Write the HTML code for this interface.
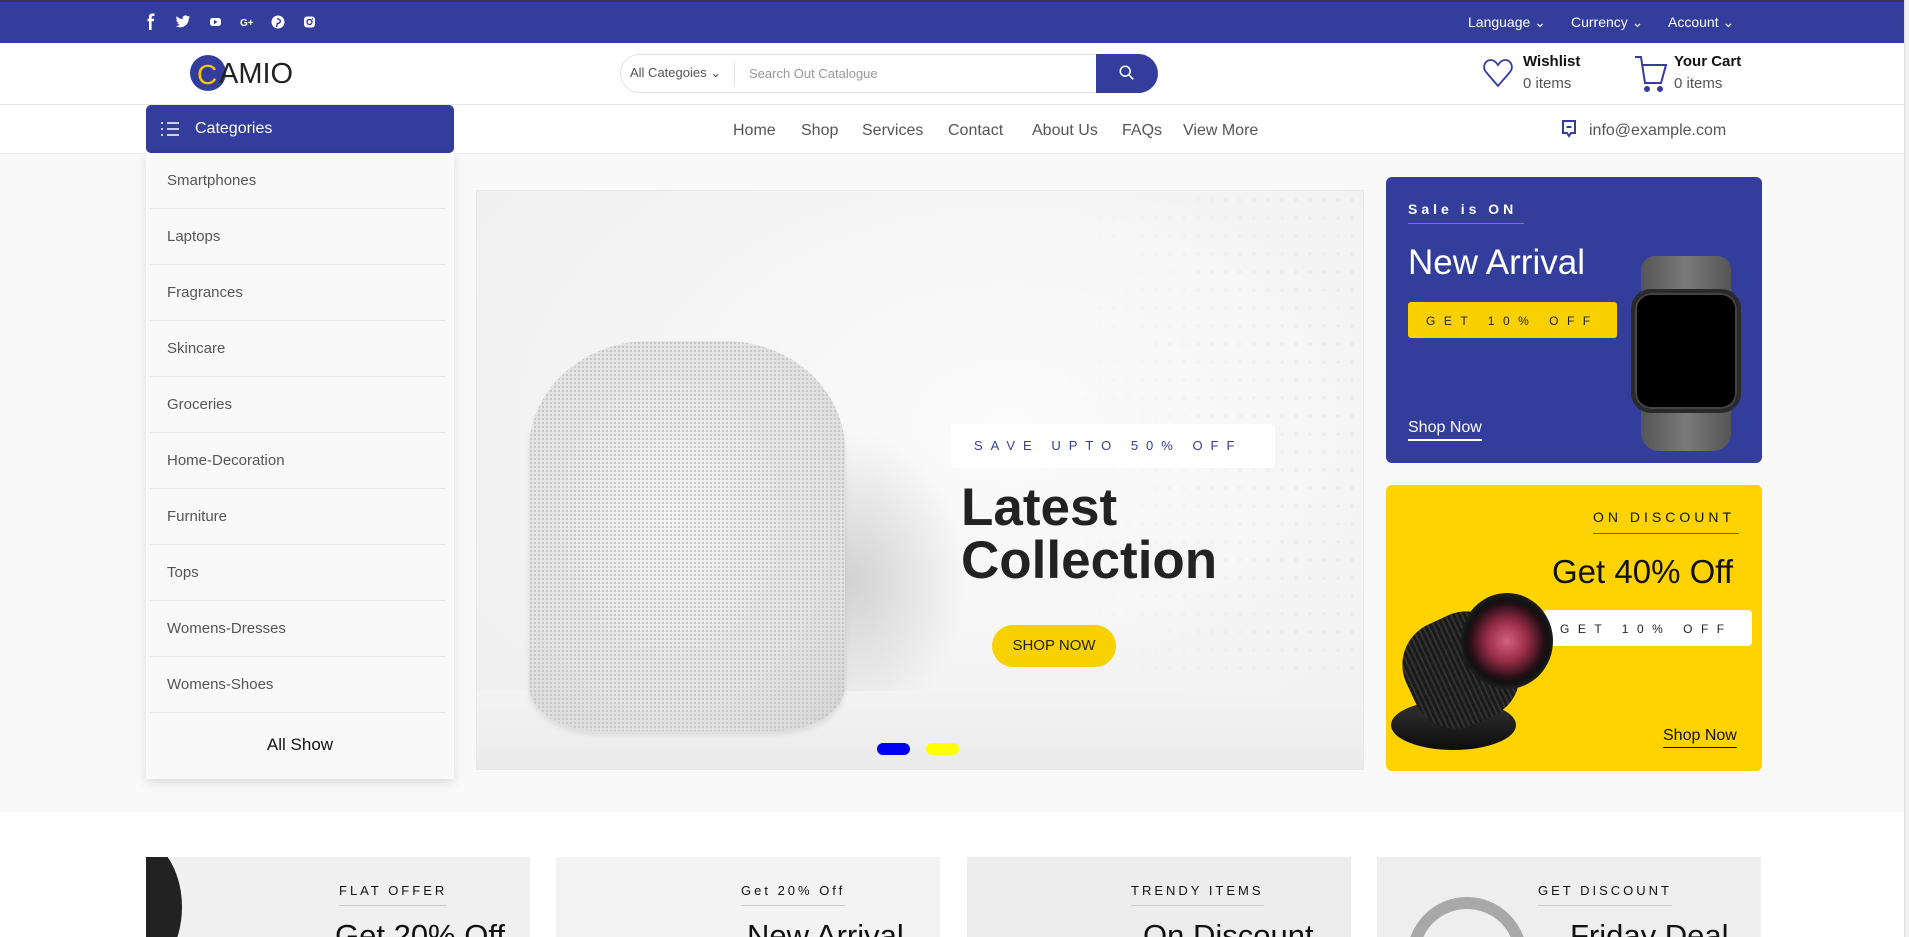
<!DOCTYPE html>
<html style="overflow:hidden"><head><meta charset="utf-8"><style>
*{margin:0;padding:0;box-sizing:border-box}
html,body{overflow:hidden}
body{width:1909px;height:937px;font-family:"Liberation Sans",sans-serif;background:#fff;position:relative;color:#333}
.a{position:absolute;white-space:nowrap}
.top{left:0;top:0;width:1909px;height:43px;background:#333d9c;border-top:2px solid #3a3a3a}
.tb{color:#fff;font-size:14px;top:14px}
.hdr{left:0;top:43px;width:1909px;height:62px;border-bottom:1px solid #e6e6e6;background:#fff}
.gray{left:0;top:153px;width:1909px;height:659px;background:#f9f9f9;border-top:1px solid #ececec}
.nav a{position:absolute;top:122px;font-size:16px;color:#555;text-decoration:none}
.cat{left:146px;top:153px;width:308px;height:626px;background:#f9f9f9;box-shadow:0 4px 10px rgba(0,0,0,.12)}
.ci{position:absolute;left:4px;width:296px;height:56px;border-bottom:1px solid #e6e6e6;font-size:15px;color:#555;padding:19px 0 0 17px}
.lab{font-size:13px;letter-spacing:3px;color:#111}
</style></head><body>
<div class="a top"></div>
<svg class="a" style="left:143px;top:12px" width="180" height="20" viewBox="0 0 180 20" fill="#fff">
<path d="M9 4h2.500V1.500H9C6.8 1.500 6 3 6 5v1.800H4.500v2.500H6V18h2.600V9.300h2.200l.4-2.500H8.600V5.200c0-.7.200-1.200 1.400-1.200z"/>
<path d="M47 5c-.5.2-1.100.4-1.700.4.6-.4 1.100-.9 1.300-1.600-.6.300-1.200.6-1.900.7a2.900 2.900 0 0 0-5 2.700C37.300 7.100 35.200 6 33.700 4.300c-.8 1.300-.4 3 .9 3.900-.5 0-.9-.2-1.300-.4 0 1.400 1 2.600 2.300 2.900-.4.100-.9.200-1.300.1.400 1.200 1.500 2 2.700 2A5.800 5.800 0 0 1 32.800 14c1.300.8 2.800 1.300 4.500 1.300 5.400 0 8.400-4.500 8.400-8.400v-.4c.6-.4 1-.9 1.300-1.500z"/>
<rect x="67" y="6" width="11" height="8" rx="2.500"/><path d="M71 7.800v4.400l3.500-2.200z" fill="#333d9c"/>
<text x="97" y="14" font-size="10" font-weight="bold" font-family="Liberation Sans">G+</text>
<circle cx="135" cy="10" r="6.500"/><path d="M134 7c2.600-.4 3.900 1.600 3 3.300-.6 1.200-2.200 1.200-2.400.4l-1.100 4.400" stroke="#333d9c" stroke-width="1.400" fill="none"/>
<rect x="161" y="4.500" width="11" height="11" rx="3"/><circle cx="166.500" cy="10" r="2.500" fill="none" stroke="#333d9c" stroke-width="1.400"/><circle cx="169.500" cy="7" r=".8" fill="#333d9c"/>
</svg>
<div class="a tb" style="left:1468px">Language &#8964;</div>
<div class="a tb" style="left:1571px">Currency &#8964;</div>
<div class="a tb" style="left:1668px">Account &#8964;</div>

<div class="a hdr"></div>
<div class="a" style="left:190px;top:55px;width:36px;height:36px;border-radius:50%;background:#333d9c"></div>
<div class="a" style="left:197px;top:59px;font-size:28px;color:#f6c800">C</div>
<div class="a" style="left:219px;top:58px;font-size:29px;color:#222">AMIO</div>
<div class="a" style="left:620px;top:54px;width:520px;height:39px;border:1px solid #e2e2e2;border-radius:20px 0 0 20px;background:#fff"></div>
<div class="a" style="left:630px;top:65px;font-size:13px;color:#555">All Categoies &#8964;</div>
<div class="a" style="left:734px;top:62px;width:1px;height:24px;background:#e2e2e2"></div>
<div class="a" style="left:749px;top:66px;font-size:13px;color:#999">Search Out Catalogue</div>
<div class="a" style="left:1096px;top:54px;width:62px;height:39px;background:#333d9c;border-radius:0 20px 20px 0"></div>
<svg class="a" style="left:1118px;top:64px" width="18" height="18" viewBox="0 0 20 20" fill="none" stroke="#fff" stroke-width="1.700"><circle cx="8" cy="8" r="5.500"/><path d="M12 12l5 5"/></svg>
<svg class="a" style="left:1482px;top:57px" width="32" height="32" viewBox="0 0 32 32" fill="none" stroke="#333d9c" stroke-width="1.800"><path d="M16 29L4 15C0 10 3 3 9 3c3 0 5 2 7 5 2-3 4-5 7-5 6 0 9 7 5 12z"/></svg>
<div class="a" style="left:1523px;top:53px;font-size:15px;font-weight:bold;color:#111">Wishlist</div>
<div class="a" style="left:1523px;top:75px;font-size:15px;color:#555">0 items</div>
<svg class="a" style="left:1634px;top:55px" width="36" height="38" viewBox="0 0 36 38" fill="none" stroke="#333d9c" stroke-width="2"><path d="M1 2h6l4 26h16l5-18H9"/><circle cx="13" cy="34" r="2" fill="#333d9c"/><circle cx="26" cy="34" r="2" fill="#333d9c"/></svg>
<div class="a" style="left:1674px;top:53px;font-size:15px;font-weight:bold;color:#111">Your Cart</div>
<div class="a" style="left:1674px;top:75px;font-size:15px;color:#555">0 items</div>

<div class="a gray"></div>
<div class="a" style="left:146px;top:105px;width:308px;height:48px;background:#333d9c;border-radius:5px"></div>
<svg class="a" style="left:160px;top:121px" width="20" height="16" viewBox="0 0 20 16" stroke="#fff" stroke-width="1.600"><path d="M1 2h2M7 2h12M1 8h2M7 8h12M1 14h2M7 14h12"/></svg>
<div class="a" style="left:195px;top:120px;font-size:16px;color:#fff">Categories</div>
<div class="nav"><a style="left:733px">Home</a><a style="left:801px">Shop</a><a style="left:862px">Services</a><a style="left:948px">Contact</a><a style="left:1032px">About Us</a><a style="left:1122px">FAQs</a><a style="left:1183px">View More</a></div>
<svg class="a" style="left:1561px;top:119px" width="16" height="20" viewBox="0 0 16 20" fill="none" stroke="#333d9c" stroke-width="2"><path d="M2 2h12v12H10l-2 3-2-3H2z"/><path d="M5.500 8h5"/></svg>
<div class="a" style="left:1589px;top:122px;font-size:16px;color:#555">info@example.com</div>

<div class="a cat">
<div class="ci" style="top:0">Smartphones</div><div class="ci" style="top:56px">Laptops</div><div class="ci" style="top:112px">Fragrances</div><div class="ci" style="top:168px">Skincare</div><div class="ci" style="top:224px">Groceries</div><div class="ci" style="top:280px">Home-Decoration</div><div class="ci" style="top:336px">Furniture</div><div class="ci" style="top:392px">Tops</div><div class="ci" style="top:448px">Womens-Dresses</div><div class="ci" style="top:504px">Womens-Shoes</div>
<div class="a" style="left:0;top:582px;width:308px;text-align:center;font-size:17px;color:#111">All Show</div>
</div>

<!-- slider -->
<div class="a" style="left:476px;top:190px;width:888px;height:580px;border:1px solid #e8e8e8;background:radial-gradient(ellipse at 60% 40%,#fbfbfb,#f2f2f2 70%,#eeeeee);overflow:hidden">
<div class="a" style="left:560px;top:0;width:328px;height:480px;background:radial-gradient(circle,#dde5f0 1.500px,transparent 2px) 0 0/14px 18px;opacity:.6;-webkit-mask:linear-gradient(90deg,transparent,#000)"></div>
<div class="a" style="left:260px;top:240px;width:230px;height:300px;border-radius:50%;background:radial-gradient(ellipse,#d2d2d2,transparent 70%)"></div>
<div class="a" style="left:0;top:500px;width:888px;height:80px;background:linear-gradient(#f3f3f3,#ebebeb)"></div>
<div class="a" style="left:52px;top:150px;width:316px;height:390px;border-radius:120px 120px 70px 70px/110px 110px 45px 45px;background:radial-gradient(circle,#c6c6c6 .9px,transparent 1.500px) 0 0/4px 4px,radial-gradient(ellipse at 45% 45%,#f6f6f6,#e2e2e2 75%,#d4d4d4);box-shadow:0 4px 6px rgba(0,0,0,.08)"></div>
<div class="a" style="left:474px;top:233px;width:324px;height:44px;background:#fff;border-radius:4px;font-size:13px;letter-spacing:8px;color:#333d9c;padding:14px 0 0 23px">SAVE UPTO 50% OFF</div>
<div class="a" style="left:484px;top:290px;font-size:53px;font-weight:bold;line-height:53px;color:#222">Latest<br>Collection</div>
<div class="a" style="left:515px;top:434px;width:124px;height:42px;border-radius:21px;background:#f9d000;font-size:15px;color:#222;text-align:center;line-height:42px">SHOP NOW</div>
<div class="a" style="left:400px;top:552px;width:33px;height:12px;border-radius:6px;background:#0000f5"></div>
<div class="a" style="left:449px;top:552px;width:33px;height:12px;border-radius:6px;background:#ffff00"></div>
</div>

<!-- banner 1 -->
<div class="a" style="left:1386px;top:177px;width:376px;height:286px;background:#333d9c;border-radius:6px;overflow:hidden">
<div class="a" style="left:22px;top:24px;font-size:14px;font-weight:bold;letter-spacing:4px;color:#fff;padding-bottom:6px;border-bottom:1px solid #8a7e6a;width:116px">Sale is ON</div>
<div class="a" style="left:22px;top:66px;font-size:35px;color:#fff">New Arrival</div>
<div class="a" style="left:22px;top:125px;width:209px;height:36px;background:#f9d000;border-radius:3px;font-size:12px;letter-spacing:8.500px;color:#222;padding:12px 0 0 18px">GET 10% OFF</div>
<div class="a" style="left:22px;top:242px;font-size:16px;color:#fff;border-bottom:2px solid #fff;padding-bottom:2px">Shop Now</div>
<div class="a" style="left:255px;top:79px;width:90px;height:195px;border-radius:14px 14px 18px 18px;background:linear-gradient(90deg,#555,#7a7a7a 50%,#555)"></div>
<div class="a" style="left:245px;top:112px;width:110px;height:124px;border-radius:20px;background:#000;border:4px solid #2a2a2a;box-shadow:inset 0 0 0 2px #444"></div>
</div>

<!-- banner 2 -->
<div class="a" style="left:1386px;top:485px;width:376px;height:286px;background:#ffd300;border-radius:6px;overflow:hidden">
<div class="a" style="left:207px;top:24px;font-size:14px;letter-spacing:4px;color:#111;padding-bottom:8px;border-bottom:1px solid #5a5aa0;width:146px">ON DISCOUNT</div>
<div class="a" style="left:166px;top:68px;font-size:33px;color:#111">Get 40% Off</div>
<div class="a" style="left:157px;top:125px;width:209px;height:36px;background:#fff;border-radius:4px;font-size:12px;letter-spacing:8.500px;color:#222;padding:12px 0 0 17px">GET 10% OFF</div>
<div class="a" style="left:277px;top:242px;font-size:16px;color:#111;border-bottom:1px solid #111;padding-bottom:2px">Shop Now</div>
<div class="a" style="left:5px;top:215px;width:125px;height:50px;border-radius:50%;background:linear-gradient(#333,#0c0c0c)"></div>
<div class="a" style="left:20px;top:130px;width:110px;height:110px;border-radius:40%;background:repeating-linear-gradient(90deg,#1a1a1a 0 3px,#333 3px 5px);transform:rotate(-25deg)"></div>
<div class="a" style="left:75px;top:108px;width:92px;height:96px;border-radius:50%;background:radial-gradient(circle,#d5607a 0,#9a2d48 30%,#2a0f18 55%,#111 62%,#2b2b2b 80%,#111 100%)"></div>
</div>

<!-- bottom cards -->
<div class="a" style="left:0;top:812px;width:1909px;height:125px;background:#fff"></div>
<div class="a" style="left:146px;top:857px;width:384px;height:80px;background:#f0f0f0;overflow:hidden"><div class="a" style="left:-60px;top:-20px;width:96px;height:140px;border-radius:50%;background:#222"></div></div>
<div class="a" style="left:556px;top:857px;width:384px;height:80px;background:#f3f3f3"></div>
<div class="a" style="left:967px;top:857px;width:384px;height:80px;background:#ededed"></div>
<div class="a" style="left:1377px;top:857px;width:384px;height:80px;background:#eeeeee;overflow:hidden"><div class="a" style="left:30px;top:40px;width:120px;height:120px;border-radius:50%;border:12px solid #a8a8a8"></div></div>
<div class="a lab" style="left:339px;top:883px;border-bottom:1px solid #ccc;padding-bottom:7px">FLAT OFFER</div>
<div class="a lab" style="left:741px;top:883px;border-bottom:1px solid #ccc;padding-bottom:7px">Get 20% Off</div>
<div class="a lab" style="left:1131px;top:883px;border-bottom:1px solid #ccc;padding-bottom:7px">TRENDY ITEMS</div>
<div class="a lab" style="left:1538px;top:883px;border-bottom:1px solid #ccc;padding-bottom:7px">GET DISCOUNT</div>
<div class="a" style="left:335px;top:920px;font-size:31px;line-height:31px;height:17px;overflow:hidden;color:#111">Get 20% Off</div>
<div class="a" style="left:747px;top:920px;font-size:31px;line-height:31px;height:17px;overflow:hidden;color:#111">New Arrival</div>
<div class="a" style="left:1143px;top:920px;font-size:31px;line-height:31px;height:17px;overflow:hidden;color:#111">On Discount</div>
<div class="a" style="left:1570px;top:920px;font-size:31px;line-height:31px;height:17px;overflow:hidden;color:#111">Friday Deal</div>
<div class="a" style="left:1904px;top:0;width:5px;height:937px;background:#f0f0f0;border-left:1px solid #ddd"></div>
</body></html>
